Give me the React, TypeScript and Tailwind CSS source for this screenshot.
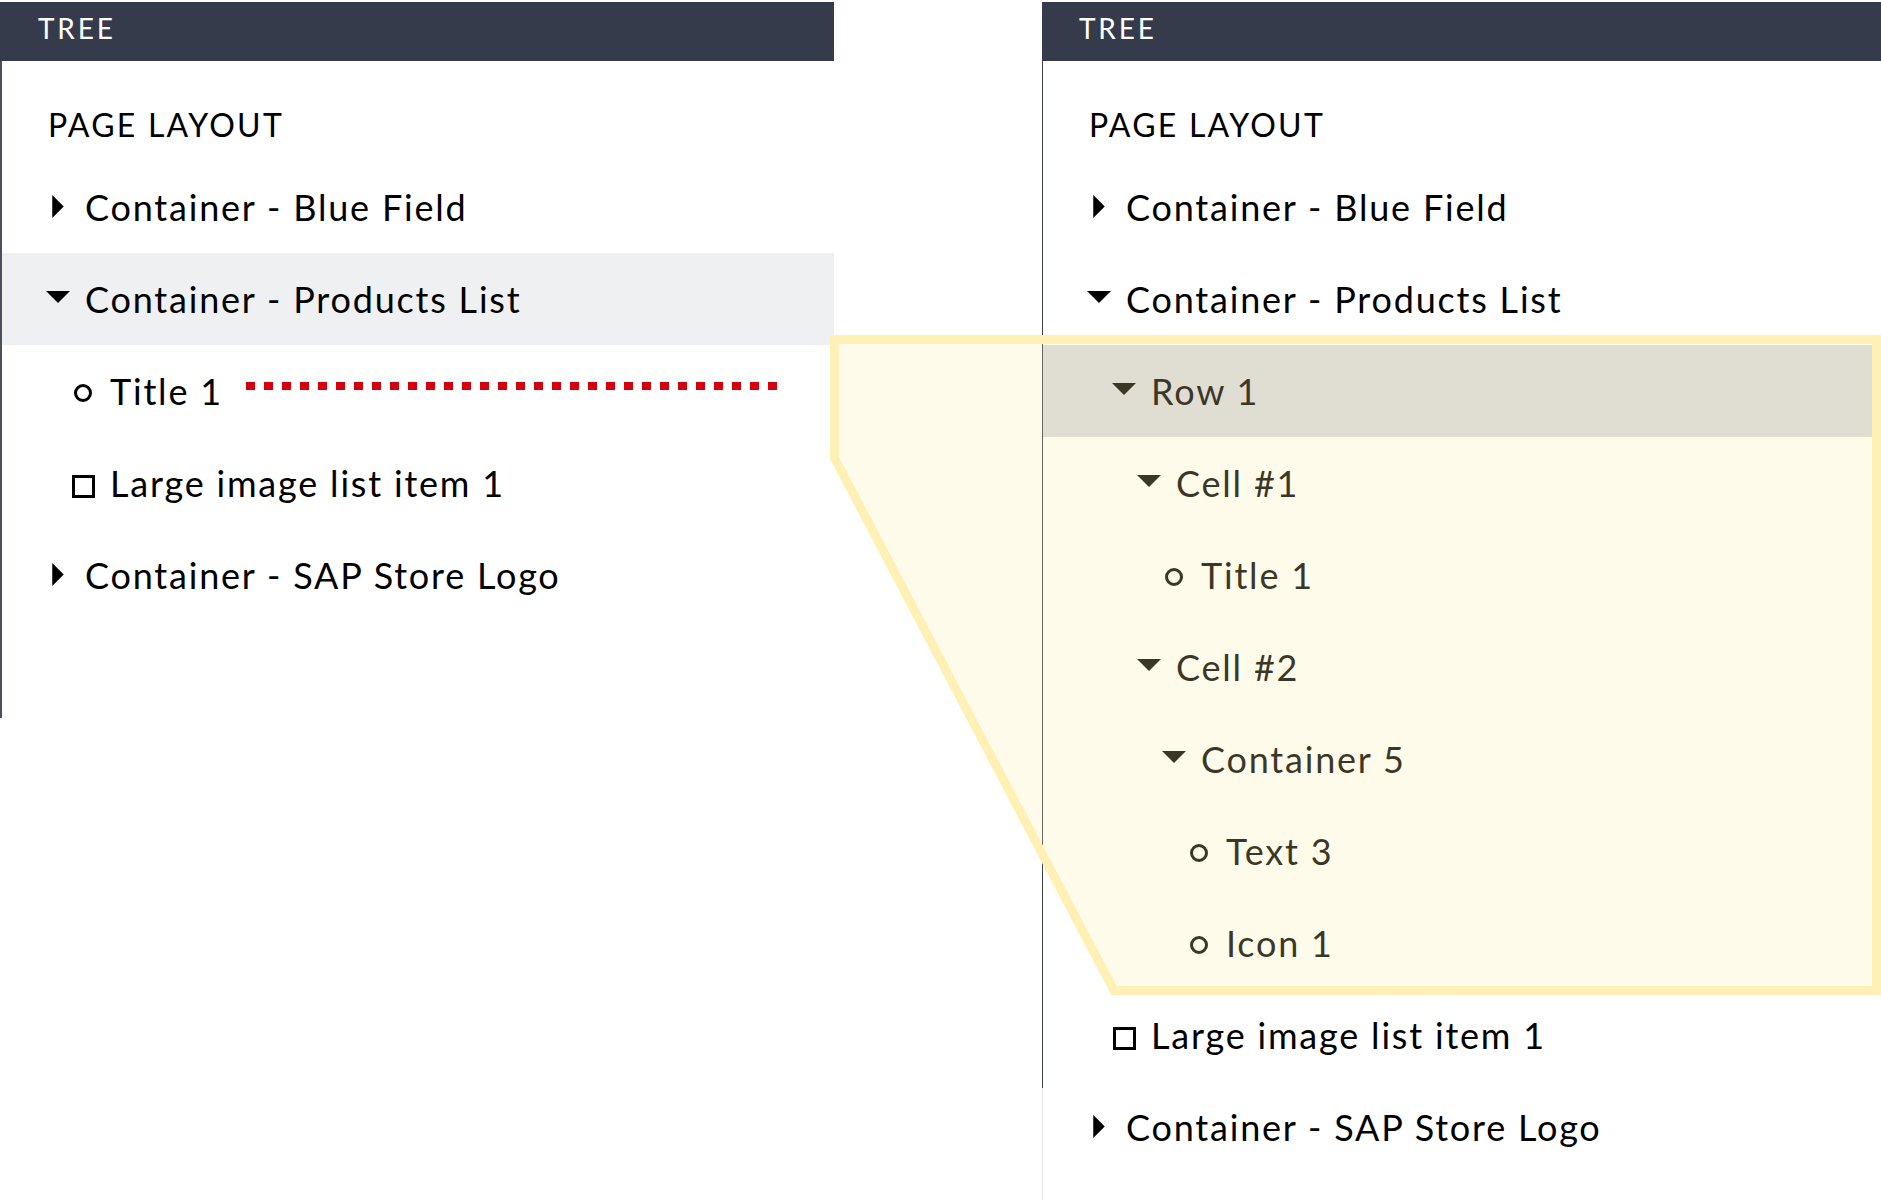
import React from 'react';

type Kind = 'closed' | 'open' | 'leaf' | 'item';

interface TreeNode {
  label: string;
  level: number;
  kind: Kind;
  selected?: boolean;
  marker?: boolean;
}

const leftTree: TreeNode[] = [
  { label: 'Container - Blue Field', level: 0, kind: 'closed' },
  { label: 'Container - Products List', level: 0, kind: 'open', selected: true },
  { label: 'Title 1', level: 1, kind: 'leaf', marker: true },
  { label: 'Large image list item 1', level: 1, kind: 'item' },
  { label: 'Container - SAP Store Logo', level: 0, kind: 'closed' },
];

const rightTree: TreeNode[] = [
  { label: 'Container - Blue Field', level: 0, kind: 'closed' },
  { label: 'Container - Products List', level: 0, kind: 'open' },
  { label: 'Row 1', level: 1, kind: 'open', selected: true },
  { label: 'Cell #1', level: 2, kind: 'open' },
  { label: 'Title 1', level: 3, kind: 'leaf' },
  { label: 'Cell #2', level: 2, kind: 'open' },
  { label: 'Container 5', level: 3, kind: 'open' },
  { label: 'Text 3', level: 4, kind: 'leaf' },
  { label: 'Icon 1', level: 4, kind: 'leaf' },
  { label: 'Large image list item 1', level: 1, kind: 'item' },
  { label: 'Container - SAP Store Logo', level: 0, kind: 'closed' },
];

function NodeIcon({ kind }: { kind: Kind }) {
  return (
    <span className="flex h-[24px] w-[24px] shrink-0 items-center justify-center">
      {kind === 'closed' && (
        <svg width="12" height="23" viewBox="0 0 12 24" className="-translate-y-[1px]">
          <path d="M0 0 L12 12 L0 24 Z" fill="currentColor" />
        </svg>
      )}
      {kind === 'open' && (
        <svg width="24" height="12" viewBox="0 0 24 12" className="-translate-y-[2px]">
          <path d="M0 0 H24 L12 12 Z" fill="currentColor" />
        </svg>
      )}
      {kind === 'leaf' && (
        <span className="h-[18px] w-[18px] shrink-0 translate-y-[2px] rounded-full border-[3px] border-current" />
      )}
      {kind === 'item' && <span className="h-[23px] w-[23px] shrink-0 translate-y-[3px] border-[3px] border-current" />}
    </span>
  );
}

function TreeRow({ node, selectedBg }: { node: TreeNode; selectedBg: string }) {
  return (
    <div
      className={`flex h-[92px] items-center ${node.selected ? selectedBg : ''}`}
      style={{ paddingLeft: 44 + node.level * 25 }}
    >
      <NodeIcon kind={node.kind} />
      <span className="ml-[15px] whitespace-nowrap text-[36px] leading-[46px] tracking-[0.05em]">{node.label}</span>
      {node.marker && (
        <span className="ml-auto mr-[54px] mt-[37px] h-[8px] w-[534px] self-start bg-[repeating-linear-gradient(to_right,#d5000d_0px,#d5000d_9px,transparent_9px,transparent_18px)]" />
      )}
    </div>
  );
}

function TreePanel({
  nodes,
  selectedBg,
  rail,
  headerPad,
  bodyHeight,
}: {
  nodes: TreeNode[];
  selectedBg: string;
  rail: string;
  headerPad: string;
  bodyHeight: string;
}) {
  return (
    <div className="flex flex-col">
      <div className={`h-[59px] bg-[#353b4b] pt-[12px] ${headerPad}`}>
        <span className="text-[28px] leading-[28px] tracking-[0.1em] text-white">TREE</span>
      </div>
      <div className={`flex ${bodyHeight}`}>
        <div className={`shrink-0 ${rail}`} />
        <div className="flex-1">
          <div className="h-[100px] pl-[46px] pt-[45px]">
            <span className="text-[32px] leading-[37px] tracking-[0.07em]">PAGE LAYOUT</span>
          </div>
          {nodes.map((n, i) => (
            <TreeRow key={i} node={n} selectedBg={selectedBg} />
          ))}
        </div>
      </div>
    </div>
  );
}

export default function App() {
  return (
    <div className="relative flex h-[1200px] w-[1881px] overflow-hidden bg-white pt-[2px] font-['Lato',sans-serif] text-black">
      <div className="w-[834px] shrink-0">
        <TreePanel
          nodes={leftTree}
          selectedBg="bg-[#eff0f2]"
          rail="w-[2px] bg-[#4b505c]"
          headerPad="pl-[38px]"
          bodyHeight="h-[657px]"
        />
      </div>
      <div className="w-[208px] shrink-0" />
      <div className="flex-1">
        <TreePanel
          nodes={rightTree}
          selectedBg="bg-[#d7d8e0]"
          rail="w-px bg-[linear-gradient(to_bottom,#3a3f4c_1027px,#e5e7eb_1027px)]"
          headerPad="pl-[37px]"
          bodyHeight="h-[1139px]"
        />
      </div>

      {/* callout zooming the Title 1 row into its expanded subtree */}
      <svg className="pointer-events-none absolute inset-0" width="1881" height="1200" viewBox="0 0 1881 1200">
        <polygon
          points="834.5,339.5 1876.5,339.5 1876.5,990.5 1114,990.5 834.5,458"
          fill="rgba(255,238,164,0.23)"
          stroke="#fff1b5"
          strokeWidth="9"
          strokeLinejoin="miter"
        />
      </svg>
    </div>
  );
}
